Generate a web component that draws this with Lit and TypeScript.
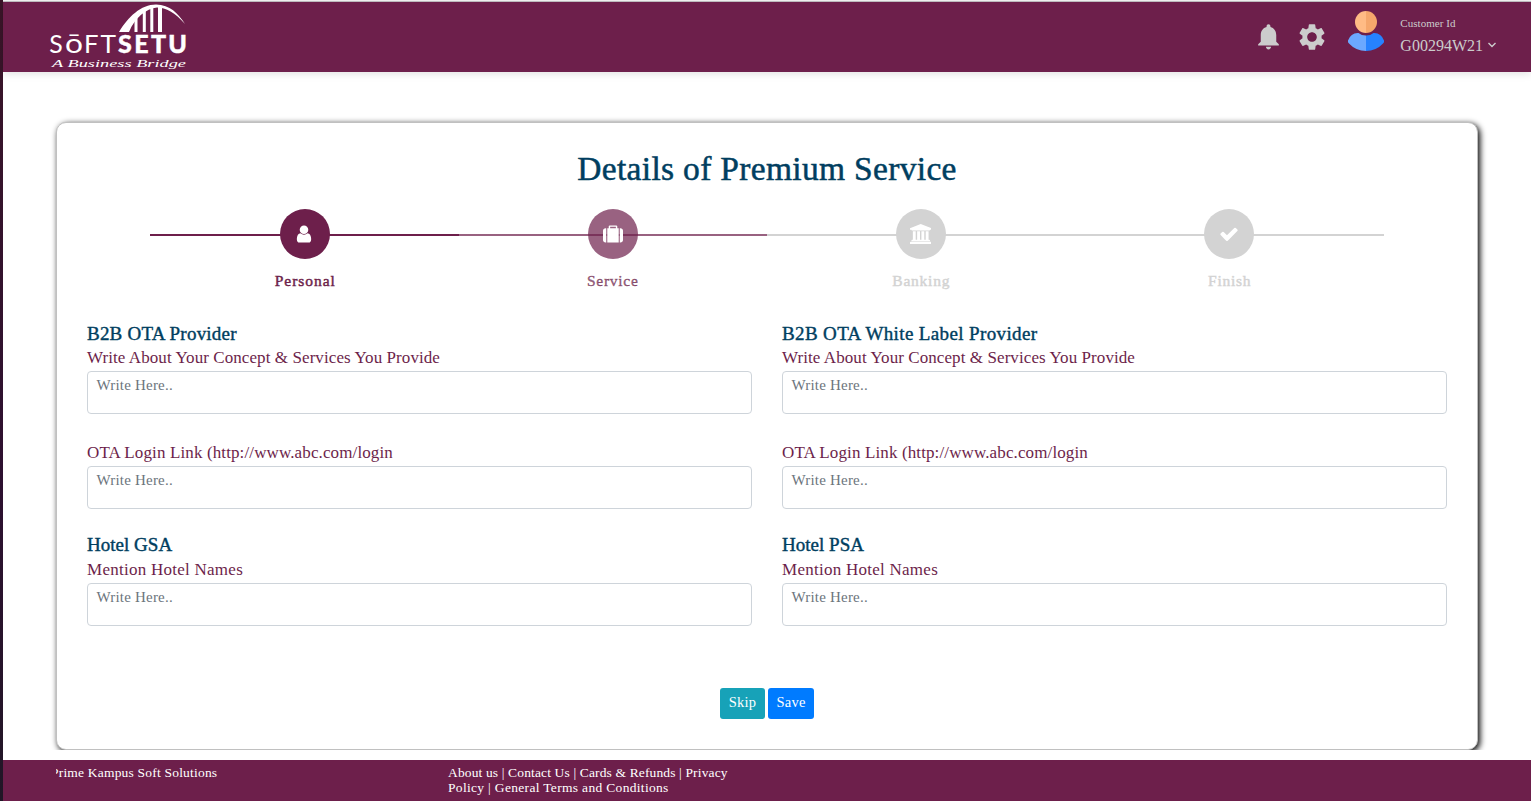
import { LitElement, html, css, svg } from "lit";
import { customElement, property } from "lit/decorators.js";

const icons = {
  user: {
    box: "0 0 1792 1792",
    d: "M1536 1399q0 109-62.5 187t-150.5 78h-854q-88 0-150.5-78t-62.5-187q0-85 8.5-160.5t31.5-152 58.5-131 94-89 134.5-34.5q131 128 313 128t313-128q76 0 134.5 34.5t94 89 58.5 131 31.5 152 8.5 160.5zm-256-887q0 159-112.5 271.5t-271.5 112.5-271.5-112.5-112.5-271.5 112.5-271.5 271.5-112.5 271.5 112.5 112.5 271.5z",
  },
  suitcase: {
    box: "0 0 1792 1792",
    d: "M640 384h512v-128h-512v128zM288 384v1280h-64q-92 0-158-66t-66-158v-832q0-92 66-158t158-66h64zM1408 384v1280h-1024v-1280h128v-160q0-40 28-68t68-28h576q40 0 68 28t28 68v160h128zM1792 608v832q0 92-66 158t-158 66h-64v-1280h64q92 0 158 66t66 158z",
  },
  bank: {
    box: "-128 0 1920 1792",
    d: "M832 0l960 384v128h-128q0 26-20.500 45t-48.500 19h-1526q-28 0-48.500-19t-20.500-45h-128v-128zM128 640h256v768h128v-768h256v768h128v-768h256v768h128v-768h256v768h59q28 0 48.500 19t20.500 45v64h-1664v-64q0-26 20.500-45t48.500-19h59zM1723 1600q28 0 48.500 19t20.500 45v128h-1920v-128q0-26 20.500-45t48.500-19z",
  },
  check: {
    box: "0 0 1792 1792",
    d: "M1671 566q0 40-28 68l-724 724-136 136q-28 28-68 28t-68-28l-136-136-362-362q-28-28-28-68t28-68l136-136q28-28 68-28t68 28l294 295 656-657q28-28 68-28t68 28l136 136q28 28 28 68z",
  },
};

@customElement("brand-logo")
class BrandLogo extends LitElement {
  static styles = css`
    :host { display: block; width: 140px; height: 70px; }
    svg { display: block; fill: #fff; }
    .thin { font: 400 25px Lato, sans-serif; }
    .round { font-size: 27px; }
    .heavy { font: 900 25px Lato, sans-serif; stroke: #fff; stroke-width: 0.4px; }
    .tag { font: italic 10.500px "Liberation Serif", serif; }
  `;
  render() {
    return html`<svg width="140" height="70" viewBox="48 2 140 70">
      <path d="M119 32C128 17 141 4.500 156 4.500C170 5 178 13 185 24C175 12.500 166 8 157 7.600C146 8.500 135 18 129 32Z" />
      <path d="M134.500 15.500l3-2.500v19h-3zM142.800 10l3-1.500v23.500h-3zM150.300 8h3v24h-3zM158 7h4v25h-4z" />
      <text class="thin" x="49.300" y="53" textLength="13.500" lengthAdjust="spacingAndGlyphs">S</text>
      <text class="thin round" x="65" y="53" textLength="18" lengthAdjust="spacingAndGlyphs">ō</text>
      <text class="thin" x="84" y="53" textLength="14.500" lengthAdjust="spacingAndGlyphs">F</text>
      <text class="thin" x="100.500" y="53" textLength="15.500" lengthAdjust="spacingAndGlyphs">T</text>
      <text class="heavy" x="118" y="53" textLength="69" lengthAdjust="spacing">SETU</text>
      <text class="tag" x="52" y="66.500" textLength="134" lengthAdjust="spacingAndGlyphs">A Business Bridge</text>
    </svg>`;
  }
}

@customElement("step-item")
class StepItem extends LitElement {
  @property() icon: keyof typeof icons = "user";
  @property() label = "";
  @property() tone = "todo";
  static styles = css`
    :host { display: block; flex: 1; }
    .step { --c: #d3d3d3; display: flex; flex-direction: column; align-items: center; }
    .done { --c: #6d1f4b; }
    .active { --c: rgba(109, 31, 75, 0.7); }
    .rail { width: 100%; height: 50px; display: flex; justify-content: center;
      background: linear-gradient(var(--c), var(--c)) 0 25px / 100% 2px no-repeat; }
    .dot { width: 50px; height: 50px; border-radius: 50%; background: var(--c);
      display: flex; align-items: center; justify-content: center; }
    .dot.user { margin-left: 1px; }
    .dot.check { margin-right: 1px; }
    .user svg, .bank svg { margin-right: 1px; }
    svg { display: block; height: 20px; fill: #fff; }
    .label { margin-top: 12px; font-size: 15.500px; line-height: 20px; letter-spacing: 0.75px;
      color: var(--c); -webkit-text-stroke: 0.45px var(--c); }
    .done .label { letter-spacing: 0.95px; margin-left: 2px; }
  `;
  render() {
    const i = icons[this.icon];
    return html`<div class="step ${this.tone}">
      <div class="rail"><div class="dot ${this.icon}">
        <svg viewBox=${i.box}>${svg`<path d=${i.d} />`}</svg>
      </div></div>
      <div class="label">${this.label}</div>
    </div>`;
  }
}

@customElement("form-field")
class FormField extends LitElement {
  @property() label = "";
  static styles = css`
    :host { display: block; letter-spacing: 0.08px; }
    .label { display: block; margin-top: 1px; font-size: 17px; line-height: 24px; color: #6d1f4b; }
    .input { display: block; box-sizing: border-box; width: 100%; height: 43px; margin-top: 1px;
      padding: 3px 8.500px; border: 1px solid #ced4da; border-radius: 4px; resize: none; outline: none;
      overflow: hidden; background: #fff;
      font: 15px/20px "Liberation Serif", serif; letter-spacing: 0.2px; }
    .input::placeholder { color: #6c757d; opacity: 1; }
  `;
  render() {
    return html`<label class="label">${this.label}</label>
      <textarea class="input" placeholder="Write Here.."></textarea>`;
  }
}

@customElement("app-root")
class AppRoot extends LitElement {
  static styles = css`
    :host { display: flex; width: 100vw; height: 801px; background: #fff; overflow: hidden;
      font-family: "Liberation Serif", serif; }
    .edge { width: 3px; flex: none; background: linear-gradient(#3a1528, #2d1030 60%, #211626); }
    .page { flex: 1; min-width: 0; display: flex; flex-direction: column; }
    .top { height: 2px; flex: none; background: linear-gradient(#f4f4f4 50%, #c4c0c4 50%); }
    .bar { height: 70px; flex: none; background: #6d1f4b; display: flex; justify-content: space-between;
      padding: 0 34px 0 45px; box-shadow: 0 2px 8px rgba(0, 0, 0, 0.12); }
    .tools { display: flex; align-items: flex-start; color: #ccc; }
    .tools svg { display: block; fill: currentColor; flex: none; }
    .bell { margin: 18.500px 12px 0 0; }
    .gear { margin: 18.500px 19px 0 0; }
    .avatar { margin: 8px 15.500px 0 0; }
    .who { padding-top: 13px; }
    .small { font-size: 11px; line-height: 16px; letter-spacing: 0.05px; }
    .id { display: flex; align-items: center; font-size: 16px; line-height: 30px; letter-spacing: 0; }
    .caret { margin: 0 0 2px 4px; }
    .main { height: 678px; flex: none; box-sizing: border-box; padding: 50px 53px 0; overflow: hidden; }
    .card { box-sizing: border-box; height: 628px; border: 1px solid #c0c0c0; border-radius: 10px;
      background: #fff; box-shadow: 2px 2px 6px #000; padding: 26px 30px 0; }
    .title { margin: 0; text-align: center; font-weight: 400; font-size: 33.500px; line-height: 40px;
      letter-spacing: 0.32px; color: #003e60; -webkit-text-stroke: 0.5px #003e60; }
    .steps { display: flex; width: 1234px; margin: 20px auto 0; }
    .grid { display: grid; grid-template-columns: 1fr 1fr; column-gap: 30px; margin-top: 32px; }
    .head { margin: 0; font-weight: 400; font-size: 19px; line-height: 22px; letter-spacing: 0.22px;
      color: #003e60; -webkit-text-stroke: 0.4px #003e60; }
    .head.long { letter-spacing: 0.37px; }
    .head.hotel { margin-bottom: 2px; letter-spacing: 0.02px; }
    .link { letter-spacing: 0.12px; }
    .names { letter-spacing: 0.26px; }
    .gap { height: 26px; }
    .gap.next { height: 25px; }
    .actions { display: flex; justify-content: center; gap: 3px; margin-top: 62px; }
    .btn { border: 0; margin: 0; padding: 0 0 2px; height: 31px; border-radius: 3px; color: #fff;
      font: 14.500px "Liberation Serif", serif; letter-spacing: 0.25px; }
    .skip { width: 45px; background: #17a2b8; }
    .save { width: 46px; background: #007bff; }
    .foot { height: 41px; flex: none; box-sizing: border-box; margin-top: 10px; padding: 5px 0 0 53px;
      background: #6d1f4b; color: #fff; font-size: 13.500px; line-height: 15px; letter-spacing: 0.14px;
      display: flex; }
    .ticker { width: 392px; overflow: hidden; white-space: nowrap; text-indent: -5px; letter-spacing: 0.2px; }
    .links { width: 300px; }
    .wide { letter-spacing: 0.32px; }
  `;

  private column(a: string, b: string, tracking = "") {
    return html`<div>
      <h5 class="head ${tracking}">${a}</h5>
      <form-field label="Write About Your Concept &amp; Services You Provide"></form-field>
      <div class="gap"></div>
      <form-field class="link" label="OTA Login Link (http://www.abc.com/login"></form-field>
      <div class="gap next"></div>
      <h5 class="head hotel">${b}</h5>
      <form-field class="names" label="Mention Hotel Names"></form-field>
    </div>`;
  }

  render() {
    return html`<div class="edge"></div>
      <div class="page">
        <div class="top"></div>
        <header class="bar">
          <brand-logo></brand-logo>
          <div class="tools">
            <svg class="bell" width="31" height="31" viewBox="0 0 24 24"><path d="M12 22c1.100 0 2-.9 2-2h-4c0 1.100.89 2 2 2zm6-6v-5c0-3.070-1.640-5.640-4.500-6.320V4c0-.83-.67-1.500-1.500-1.500s-1.500.67-1.500 1.500v.68C7.630 5.360 6 7.920 6 11v5l-2 2v1h16v-1l-2-2z"/></svg>
            <svg class="gear" width="32" height="32" viewBox="0 0 24 24"><path d="M19.140 12.940c.04-.3.06-.61.06-.94 0-.32-.02-.64-.07-.94l2.030-1.580c.18-.14.23-.41.12-.61l-1.920-3.320c-.12-.22-.37-.29-.59-.22l-2.390.96c-.5-.38-1.030-.7-1.620-.94l-.36-2.540c-.04-.24-.24-.41-.48-.41h-3.840c-.24 0-.43.17-.47.41l-.36 2.540c-.59.24-1.130.57-1.620.94l-2.390-.96c-.22-.08-.47 0-.59.22L2.740 8.870c-.12.21-.08.47.12.61l2.030 1.580c-.05.3-.09.63-.09.94s.02.64.07.94l-2.030 1.580c-.18.14-.23.41-.12.61l1.920 3.320c.12.22.37.29.59.22l2.390-.96c.5.38 1.030.7 1.620.94l.36 2.540c.05.24.24.41.48.41h3.840c.24 0 .44-.17.47-.41l.36-2.540c.59-.24 1.130-.56 1.620-.94l2.390.96c.22.08.47 0 .59-.22l1.920-3.320c.12-.22.07-.47-.12-.61l-2.010-1.580zM12 15.600c-1.980 0-3.600-1.620-3.600-3.600s1.620-3.600 3.600-3.600 3.600 1.620 3.600 3.600-1.620 3.600-3.600 3.600z"/></svg>
            <svg class="avatar" width="38" height="42" viewBox="0 0 38 42">
              <path fill="#ffbb85" d="M19 1a11 11 0 0 0 0 22z"/>
              <path fill="#f5a76c" d="M19 1a11 11 0 0 1 0 22z"/>
              <path fill="#6ba8ff" d="M19 25.500Q14.500 25.500 11.500 23Q4 22.500 1 30.500Q0.500 32.500 2 33.500Q9 41 19 41z"/>
              <path fill="#2682ff" d="M19 25.500Q23.500 25.500 26.500 23Q34 22.500 37 30.500Q37.500 32.500 36 33.500Q29 41 19 41z"/>
            </svg>
            <div class="who">
              <div class="small">Customer Id</div>
              <div class="id">G00294W21
                <svg class="caret" width="10" height="8" viewBox="0 0 10 8"><path fill="none" stroke="currentColor" stroke-width="1.400" d="M1.500 2L5 5.500L8.500 2"/></svg>
              </div>
            </div>
          </div>
        </header>
        <main class="main">
          <section class="card">
            <h2 class="title">Details of Premium Service</h2>
            <div class="steps">
              <step-item icon="user" label="Personal" tone="done"></step-item>
              <step-item icon="suitcase" label="Service" tone="active"></step-item>
              <step-item icon="bank" label="Banking" tone="todo"></step-item>
              <step-item icon="check" label="Finish" tone="todo"></step-item>
            </div>
            <div class="grid">
              ${this.column("B2B OTA Provider", "Hotel GSA")}
              ${this.column("B2B OTA White Label Provider", "Hotel PSA", "long")}
            </div>
            <div class="actions">
              <button class="btn skip">Skip</button>
              <button class="btn save">Save</button>
            </div>
          </section>
        </main>
        <footer class="foot">
          <div class="ticker">Prime Kampus Soft Solutions</div>
          <div class="links">About us | Contact Us | Cards &amp; Refunds | Privacy <span class="wide">Policy | General Terms and Conditions</span></div>
        </footer>
      </div>`;
  }
}
